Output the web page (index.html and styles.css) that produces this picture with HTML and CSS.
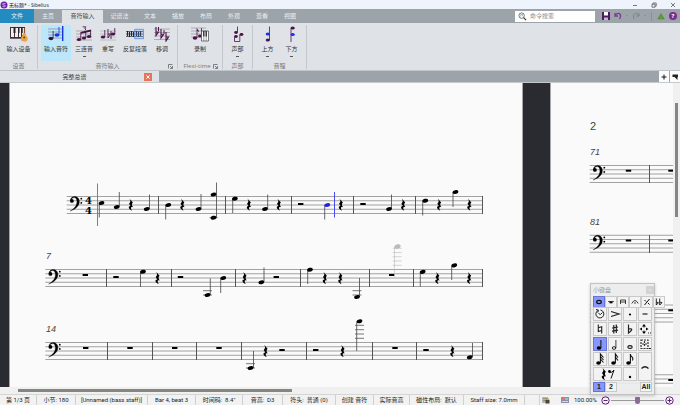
FILE: index.html
```
<!DOCTYPE html>
<html lang="zh-CN">
<head>
<meta charset="utf-8">
<title>无标题* - Sibelius</title>
<link rel="stylesheet" href="styles.css">
</head>
<body>
<svg class="defs" aria-hidden="true">
  <defs>
    <ellipse id="head" rx="2.9" ry="1.9" transform="rotate(-16)"/>
    <path id="rest" d="M-1.6-6.2 1.9-2.2C.4-.8.6.7 2.2 2.6-.2 1.6-.8 3.2 1 6-3 4.4-3 1.2-.4 1.4L-2-.9C-.3-2.6-.2-4-1.6-6.2Z"/>
    <rect id="bar-rest" x="-2.7" y="-1" width="5.4" height="2"/>
    <g id="clef">
      <circle cx="5.4" cy="4.400" r="1.900"/>
      <path d="M3.900 4C3.900-1.300 12.900-1.400 12.900 5 12.900 9.600 9 12.600 3.600 14.600 8.300 11.700 10.400 9 10.400 5 10.400.2 5.600-.2 4.500 4Z" stroke="#000" stroke-width=".3"/>
      <circle cx="14.800" cy="2.200" r=".9"/><circle cx="14.800" cy="6.400" r=".9"/>
    </g>
    <path id="lines" d="M0 0H437.400M0 4.250H437.400M0 8.500H437.400M0 12.750H437.400M0 17H437.400"/>
  </defs>
</svg>

<header class="titlebar">
  <svg class="app-logo" viewBox="0 0 8 8"><circle cx="4" cy="4" r="3.500" fill="#6a1fb0"/><path d="M5.500 2.500H3.500Q2.500 2.500 2.500 3.300T4 4.100 5.400 5 4.300 5.700H2.400" fill="none" stroke="#e7d3ff" stroke-width=".7"/></svg>
  <h1>无标题* - Sibelius</h1>
  <div class="window-buttons">
    <button aria-label="最小化"><svg viewBox="0 0 6 6"><path d="M1 3.500H5"/></svg></button>
    <button aria-label="还原"><svg viewBox="0 0 6 6"><path d="M1 2.200H4V5.200H1ZM2 2V1H5.200V4.200H4.200"/></svg></button>
    <button aria-label="关闭"><svg viewBox="0 0 6 6"><path d="M1 1 5 5M5 1 1 5"/></svg></button>
  </div>
</header>

<nav class="menu">
  <button class="file">文件</button>
  <button>主页</button>
  <button class="active">音符输入</button>
  <button class="wide">记谱法</button>
  <button>文本</button>
  <button>播放</button>
  <button>布局</button>
  <button>外观</button>
  <button>查看</button>
  <button>视图</button>
  <div class="tools">
    <label class="search">
      <svg viewBox="0 0 10 10"><circle cx="4" cy="4" r="3" fill="none" stroke="#444" stroke-width=".8"/><path d="M6.200 6.200 9 9" stroke="#333" stroke-width="1.300"/><path d="M3 5V3L5 2.700V4.600" fill="none" stroke="#777" stroke-width=".6"/></svg>
      <input type="text" placeholder="命令搜索" aria-label="命令搜索">
    </label>
    <button aria-label="保存"><svg viewBox="0 0 8 8"><path d="M0 0H8V8H0Z" fill="#4c1b62"/><path d="M2 0H6V3.500H2Z" fill="#fff"/><path d="M2 5.500H6V8H2Z" fill="#c8b8d2"/></svg></button>
    <button aria-label="撤销"><svg viewBox="0 0 8 8"><path d="M1 1V4H4M1.300 3.700C2.500.2 7.300.8 6.400 5.200L5.500 7" fill="none" stroke="#75408f" stroke-width="1.300"/></svg></button>
    <i class="caret"></i>
    <button aria-label="重做"><svg viewBox="0 0 8 8"><path d="M7 1V4H4M6.700 3.700C5.500.2.700.8 1.600 5.200L2 7" fill="none" stroke="#7c8488" stroke-width="1"/></svg></button>
    <i class="caret"></i>
    <i class="divider"></i>
    <button aria-label="更新"><svg viewBox="0 0 8 8"><path d="M4 1.500 7.300 7H.7Z" fill="#5f9d3c" stroke="#47752f" stroke-width=".4"/></svg></button>
    <button aria-label="帮助" class="help">?</button>
  </div>
</nav>

<section class="ribbon">
  <div class="group">
    <div class="commands">
      <button class="command"><svg viewBox="0 0 18 16"><path d="M0 1H15V12H0Z" fill="#3b3039"/><path d="M1 2H4V11H1ZM5 2H8V11H5ZM9 2H11V11H9ZM12 2H14V9H12Z" fill="#f4f0f2"/><path d="M3.500 1H5.500V7H3.500ZM8 1H9.500V7H8ZM11.300 1H12.700V7H11.300Z" fill="#2a2028"/><path d="M0 12H15V13H0Z" fill="#70646c"/><path d="M14.500 2V9" stroke="#83502c" stroke-width="1.200"/><path d="M12.500 7.500Q14.500 6.500 15.800 8 16 9.500 17.500 11.500 18.500 16 14 15.600 9.500 15.300 11.500 11 13 9 12.500 7.500Z" fill="#eba74b"/><circle cx="14.200" cy="11.500" r="1.100" fill="#6e4526"/></svg>输入设备</button>
    </div>
    <p>设置</p>
  </div>
  <div class="group entry">
    <div class="commands">
      <button class="command selected"><svg viewBox="0 0 18 16"><path d="M1 3H16M1 6H16M1 9H16M1 12H16" stroke="#777790" stroke-width=".6"/><g fill="#35124a"><ellipse cx="4" cy="12.500" rx="2.400" ry="1.700"/><path d="M5.700 5H6.500V12H5.700Z"/></g><g fill="#1735dc"><ellipse cx="10" cy="9" rx="2.400" ry="1.700"/><path d="M11.600 1H12.400V9H11.600ZM15 0H16.400V15H15Z"/></g></svg>输入音符</button>
      <button class="command narrow"><svg viewBox="0 0 18 16"><path d="M1 5H17M1 8H17M1 11H17M1 14H17" stroke="#888" stroke-width=".6"/><g fill="#4b1248"><ellipse cx="4" cy="13.500" rx="2.200" ry="1.600"/><ellipse cx="9" cy="12" rx="2.200" ry="1.600"/><ellipse cx="14" cy="10.500" rx="2.200" ry="1.600"/><path d="M5.400 6 16 3.500V5.500L6.200 7.800V13.500H5.400ZM10.400 6H11.200V12H10.400ZM15.200 4H16V10.500H15.200Z"/></g><path d="M7.500.8H11L9.500 2.300Q12 2.500 10 4.300" fill="none" stroke="#4b1248" stroke-width=".8"/></svg>三连音<i class="drop"></i></button>
      <button class="command narrow"><svg viewBox="0 0 18 16"><path d="M1 5H17M1 8H17M1 11H17M1 14H17" stroke="#999" stroke-width=".5"/><g fill="#4b1248"><ellipse cx="4" cy="11" rx="2.200" ry="1.600"/><ellipse cx="14" cy="8" rx="2.200" ry="1.600"/><path d="M5.400 4H6.200V11H5.400ZM15.400 2H16.200V8H15.400Z"/></g><path d="M9 3V12L11.500 8 9 8M12 5V13" fill="none" stroke="#4b1248" stroke-width=".9"/></svg>重写</button>
      <button class="command"><svg viewBox="0 0 18 16"><path d="M0 5.500H17M0 8H17M0 10.500H17" stroke="#333" stroke-width=".7"/><path d="M1.500 5V10M3.500 6V11M5.500 5V10M7.500 6V11M10.500 5V10M12.500 6V11M14.500 5V10" stroke="#28203a" stroke-width="1.100"/><path d="M8.700 3.300H17.500V12.700H8.700Z" fill="#5ba0f040" stroke="#528de2" stroke-width=".8"/></svg>反复段落</button>
      <button class="command narrow"><svg viewBox="0 0 18 16"><path d="M1 3H17M1 6.500H17M1 10H17M1 13.500H17" stroke="#888" stroke-width=".6"/><path d="M3 1V9.500L5.500 6H3M8 3V12L10.500 8.500 8 8M13 6V15L15.500 11 13 11" fill="none" stroke="#4b1248" stroke-width="1.100"/><path d="M5.500 1V5M11 4V8" stroke="#4b1248"/></svg>移调</button>
    </div>
    <p>音符输入<svg class="launcher" viewBox="0 0 5 5"><path d="M.5 4.500V.5H4.500M2 2 4.300 4.300M4.500 2V4.500H2" /></svg></p>
  </div>
  <div class="group record">
    <div class="commands">
      <button class="command"><svg viewBox="0 0 18 16"><path d="M0 2H15M0 5H15M0 8H13M0 11H12" stroke="#888" stroke-width=".6"/><g fill="#4b1248"><ellipse cx="4" cy="12" rx="2.300" ry="1.700"/><ellipse cx="9" cy="10" rx="2" ry="1.500"/><path d="M5.600 2 8 5 7.500 6 6.400 4.500V12H5.600ZM10.200 2H11V10H10.200Z"/></g><path d="M10.500 5H17.500V15H10.500Z" fill="#fff" stroke="#444" stroke-width=".7"/><path d="M12.800 5V15M15.200 5V15" stroke="#444" stroke-width=".5"/><path d="M12.800 5V10.500M15.200 5V10.500" stroke="#241c26" stroke-width="1.200"/></svg>录制</button>
    </div>
    <p>Flexi-time<svg class="launcher" viewBox="0 0 5 5"><path d="M.5 4.500V.5H4.500M2 2 4.300 4.300M4.500 2V4.500H2"/></svg></p>
  </div>
  <div class="group voice">
    <div class="commands">
      <button class="command narrow"><svg viewBox="0 0 18 16"><g fill="#4b1248"><ellipse cx="7" cy="6.500" rx="1.800" ry="1.400"/><ellipse cx="7" cy="10.500" rx="1.800" ry="1.400"/><ellipse cx="12.500" cy="8.500" rx="1.900" ry="1.400"/></g><path d="M8.500.5V6.500M5.500 10.500V15.500H10.800V8.500" fill="none" stroke="#4b1248" stroke-width=".8"/></svg>声部<i class="drop"></i></button>
    </div>
    <p>声部</p>
  </div>
  <div class="group interval">
    <div class="commands">
      <button class="command narrow"><svg viewBox="0 0 18 16"><path d="M10.500.5V14" stroke="#4b1248" stroke-width=".8"/><ellipse cx="8.800" cy="14" rx="2.100" ry="1.600" fill="#4b1248"/><ellipse cx="8.800" cy="8" rx="2.100" ry="1.600" fill="#1b2ef0"/></svg>上方<i class="drop"></i></button>
      <button class="command narrow"><svg viewBox="0 0 18 16"><path d="M8 2V16" stroke="#4b1248" stroke-width=".8"/><ellipse cx="9.700" cy="2" rx="2.100" ry="1.600" fill="#4b1248"/><ellipse cx="9.700" cy="8.500" rx="2.100" ry="1.600" fill="#1b2ef0"/></svg>下方<i class="drop"></i></button>
    </div>
    <p>音程</p>
  </div>
</section>

<div class="tabs">
  <div class="tab"><span>完整总谱</span><button aria-label="关闭标签"><svg viewBox="0 0 8 8"><path d="M2.300 2.300 5.700 5.700M5.700 2.300 2.300 5.700" stroke="#fff"/></svg></button></div>
  <button class="square add" aria-label="新建标签"><svg viewBox="0 0 10 10"><path d="M5 2.500V7.500M2.500 5H7.500" stroke="#111"/></svg></button>
  <button class="square" aria-label="切换窗口"><svg viewBox="0 0 10 10"><path d="M2.500 2.500H8V5H2.500ZM4.500 5H7.500V8Z" fill="#222"/></svg></button>
</div>

<main class="workspace">
  <div class="gutter left"></div>
  <svg class="page" viewBox="10 83 512 304" preserveAspectRatio="xMinYMin slice" role="img" aria-label="第 1 页">
    <g class="staff">
      <path d="M66.700 196.500H482.700M66.700 200.750H482.700M66.700 205H482.700M66.700 209.250H482.700M66.700 213.500H482.700"/>
      <use href="#lines" x="45.300" y="269.500"/>
      <use href="#lines" x="45.300" y="342.500"/>
    </g>
    <path class="bars" d="M158.500 196V214M225.500 196V214M291.500 196V214M353.500 196V214M415.500 196V214M482.500 196V214M106.500 269V287M171.500 269V287M235.500 269V287M300.500 269V287M369.500 269V287M413.500 269V287M482.500 269V287M107.500 342V360M152.500 342V360M196.500 342V360M241.500 342V360M306.500 342V360M372.500 342V360M416.500 342V360M482.500 342V360"/>
    <path class="stems" d="M99.300 203V217.500M119.300 192V207M149.500 194.500V209M165.700 205V219.500M201 194V209M216.500 182.500V218M232.700 199V213M267.700 194.500V209M324.700 205V219.500M391.500 194.500V209M422.700 201V215.500M453 192V207
      M140.500 272V287M210.300 278.500V295M220.700 278V293M264 267.500V282M307.700 270V284M359.500 278V297M420.300 272V286.500M451.700 265.500V280
      M253.500 351V368M356.700 321.500V351M472.500 343V357"/>
    <path class="ledgers" d="M209.500 217.700H217.500M203 290.700H212M203 295H212M352.500 290.700H361.500M352.500 295H361.500M246 363.700H255M246 368H255M355 325.300H364M355 329.700H364M355 334H364M355 338.300H364"/>
    <use href="#clef" x="66.500" y="196.500"/><use href="#clef" x="45" y="269.500"/><use href="#clef" x="45" y="342.500"/>
    <text class="meter" x="88.500" y="204">4</text><text class="meter" x="88.500" y="214">4</text>
    <g>
      <use href="#head" x="101.500" y="203"/><use href="#head" x="116.700" y="207"/><use href="#head" x="146.700" y="209"/>
      <use href="#head" x="168.300" y="205"/><use href="#head" x="198.500" y="209"/><use href="#head" x="213.500" y="194.500"/><use href="#head" x="213.500" y="217.700"/>
      <use href="#head" x="234.900" y="198.700"/><use href="#head" x="265" y="209"/><use href="#head" x="389" y="209"/>
      <use href="#head" x="425.300" y="200.700"/><use href="#head" x="455.500" y="192"/>
      <use href="#head" x="143" y="271.700"/><use href="#head" x="207.500" y="295"/><use href="#head" x="223.300" y="278"/><use href="#head" x="261.300" y="282.300"/>
      <use href="#head" x="310" y="269.700"/><use href="#head" x="357" y="297"/><use href="#head" x="422.700" y="271.900"/><use href="#head" x="454.300" y="265.400"/>
      <use href="#head" x="250.500" y="368"/><use href="#head" x="359.500" y="321.300"/><use href="#head" x="469.700" y="357.300"/>
    </g>
    <g>
      <use href="#rest" x="131" y="204.700"/><use href="#rest" x="182.500" y="204.700"/><use href="#rest" x="249" y="204.700"/><use href="#rest" x="279" y="204.700"/><use href="#rest" x="341" y="204.700"/><use href="#rest" x="403.300" y="204.700"/><use href="#rest" x="439.300" y="204.700"/><use href="#rest" x="469.500" y="204.700"/>
      <use href="#rest" x="157.700" y="278"/><use href="#rest" x="244.700" y="278"/><use href="#rest" x="325" y="278"/><use href="#rest" x="340.500" y="278"/><use href="#rest" x="437.500" y="278"/><use href="#rest" x="469.300" y="278"/>
      <use href="#rest" x="265.700" y="351"/><use href="#rest" x="342.700" y="351"/><use href="#rest" x="452.500" y="351"/>
    </g>
    <g>
      <use href="#bar-rest" x="300.700" y="204"/><use href="#bar-rest" x="363" y="204"/>
      <use href="#bar-rest" x="85.300" y="275"/><use href="#bar-rest" x="116" y="277"/><use href="#bar-rest" x="180.500" y="277"/><use href="#bar-rest" x="276.300" y="277"/><use href="#bar-rest" x="391.700" y="275"/>
      <use href="#bar-rest" x="85.700" y="348"/><use href="#bar-rest" x="130" y="348"/><use href="#bar-rest" x="174.700" y="348"/><use href="#bar-rest" x="219" y="348"/><use href="#bar-rest" x="282" y="350"/><use href="#bar-rest" x="315.700" y="350"/><use href="#bar-rest" x="395" y="348"/><use href="#bar-rest" x="426" y="350"/>
    </g>
    <path d="M97.500 183.500V226" stroke="#3fa860"/>
    <use href="#head" x="327.300" y="205" fill="#2222ee"/>
    <path d="M334.500 192V217.500" stroke="#4a4af0"/>
    <g fill="#bbb" stroke="#bbb" stroke-width=".6"><use href="#head" x="397.500" y="246.500"/><path d="M394.500 247V277M392.700 248.300H401.700M392.700 252.500H401.700M392.700 256.700H401.700M392.700 261H401.700M392.700 265.300H401.700"/></g>
    <text class="number" x="46" y="259">7</text>
    <text class="number" x="46" y="332">14</text>
  </svg>
  <div class="gutter"></div>
  <svg class="page second" viewBox="551 83 122 304" preserveAspectRatio="xMinYMin slice" role="img" aria-label="第 2 页">
    <g class="staff">
      <use href="#lines" x="589.700" y="165.500"/><use href="#lines" x="589.700" y="235.250"/><use href="#lines" x="589.700" y="305"/><use href="#lines" x="589.700" y="374.750"/>
    </g>
    <path class="bars" d="M649.500 165V183M649.500 235V253M649.500 305V322M649.500 375V387"/>
    <use href="#clef" x="589.500" y="165.500"/><use href="#clef" x="589.500" y="235.250"/><use href="#clef" x="589.500" y="305"/><use href="#clef" x="589.500" y="374.750"/>
    <use href="#bar-rest" x="628.500" y="170.700"/><use href="#bar-rest" x="671" y="170.700"/><use href="#bar-rest" x="628.500" y="240.500"/><use href="#bar-rest" x="671" y="240.500"/><use href="#bar-rest" x="671" y="310.300"/><use href="#bar-rest" x="671" y="380"/>
    <text class="page-number" x="590" y="130">2</text>
    <text class="number" x="590" y="155">71</text>
    <text class="number" x="590" y="225">81</text>
  </svg>
  <div class="scroll-y"><i></i></div>
</main>
<div class="scroll-x"><i></i></div>

<footer class="status">
  <span>第 1/3 页</span>
  <span>小节: 180</span>
  <span>[Unnamed (bass staff)]</span>
  <span>Bar 4, beat 3</span>
  <span>时间码:&nbsp; 8.4"</span>
  <span>音高:&nbsp; D3</span>
  <span>符头:&nbsp; 普通 (0)</span>
  <span>创建 音符</span>
  <span>实际音高</span>
  <span>磁性布局:&nbsp; 默认</span>
  <span>Staff size: 7.0mm</span>
  <span></span>
  <div class="zoom">
    <svg viewBox="0 0 8 8"><path d="M0 1H6V7H0Z" fill="#b9b9b9"/><path d="M1 2.500H5M1 4.500H4" stroke="#777" stroke-width=".6"/><path d="M3.500 4H7.500V7.500H3.500Z" fill="#4d4432"/><path d="M4.300 4V2.800H6.700V4" fill="none" stroke="#b98b22" stroke-width=".8"/></svg>
    <svg viewBox="0 0 8 8"><path d="M0 1H8V7H0Z" fill="#8d8fa8"/><path d="M1 2H4V4H1Z" fill="#d77"/><path d="M4 2H7V4H4Z" fill="#7cc"/><path d="M1 5.500H7" stroke="#eee" stroke-width=".8"/></svg>
    <label for="zoom">100.00%</label>
    <button aria-label="缩小"><svg viewBox="0 0 9 9"><circle cx="4.500" cy="4.500" r="3.700"/><path d="M2.500 4.500H6.500"/></svg></button>
    <input id="zoom" type="range" min="0" max="100" value="50">
    <button aria-label="放大"><svg viewBox="0 0 9 9"><circle cx="4.500" cy="4.500" r="3.700"/><path d="M2.500 4.500H6.500M4.500 2.500V6.500"/></svg></button>
  </div>
</footer>

<aside class="keypad">
  <header><span>小键盘</span><button aria-label="关闭小键盘">×</button></header>
  <div class="layouts">
    <button class="on" aria-label="常用音符"><svg viewBox="0 0 10 10"><ellipse cx="5" cy="5" rx="2.300" ry="1.600" fill="none" stroke="#111" stroke-width="1.200"/></svg></button>
    <button aria-label="更多音符"><svg viewBox="0 0 10 10"><path d="M2 4.500H8" stroke="#111" stroke-width=".7"/><path d="M3.500 4.500H6.500V6.300H3.500Z"/></svg></button>
    <button aria-label="符杠"><svg viewBox="0 0 10 10"><path d="M2.500 7V3H7.500V7M2.500 5H7.500" fill="none" stroke="#111" stroke-width=".8"/></svg></button>
    <button aria-label="奏法"><svg viewBox="0 0 10 10"><path d="M1.800 6.500Q5 .5 8.200 6.500" fill="none" stroke="#111" stroke-width=".8"/><circle cx="5" cy="6" r=".7"/></svg></button>
    <button aria-label="爵士奏法"><svg viewBox="0 0 10 10"><path d="M2.500 8 7.500 2M2.500 3 4 4.500M6 6 7.500 7.500" stroke="#111"/></svg></button>
    <button aria-label="变音记号"><svg viewBox="0 0 10 10"><path d="M2.300 1.500V8L4.500 5.700 2.300 5M5.700 1.500V8L8 5.700 5.700 5" fill="none" stroke="#111" stroke-width=".9"/></svg></button>
  </div>
  <div class="keys">
    <button aria-label="返回"><svg viewBox="0 0 14 14"><path d="M5 3.400A4 4 0 1 0 7.500 3M3 2.500 5.500 3.200 4.700 5.500M7.500 7.500 9.500 5.500M7.500 7.500 5.500 6.500" fill="none" stroke="#222"/></svg></button>
    <button aria-label="重音"><svg viewBox="0 0 14 14"><path d="M3 4.500 11 7 3 9.500" fill="none" stroke="#222" stroke-width="1.200"/></svg></button>
    <button aria-label="断奏"><svg viewBox="0 0 14 14"><circle cx="7" cy="7.500" r="1.100"/></svg></button>
    <button aria-label="保持音"><svg viewBox="0 0 14 14"><path d="M4.500 7H9.500" stroke="#222" stroke-width="1.200"/></svg></button>
    <button aria-label="还原号"><svg viewBox="0 0 14 14"><path d="M5.300 2.500V9.500L8.700 8.500M8.700 11.500V4.700L5.300 5.700" fill="none" stroke="#222" stroke-width="1.100"/></svg></button>
    <button aria-label="升号"><svg viewBox="0 0 14 14"><path d="M5.800 3V11.500M8.300 2.500V11M4 6 10 5M4 9.200 10 8.200" stroke="#222" stroke-width="1.200"/></svg></button>
    <button aria-label="降号"><svg viewBox="0 0 14 14"><path d="M5.500 2.500V11Q12 6 5.500 7" fill="none" stroke="#222" stroke-width="1.200"/></svg></button>
    <button aria-label="移动"><svg viewBox="0 0 14 14"><path d="M6 2 8 4.500H4ZM6 12 4 9.500H8ZM1.500 7 4 5.500V8.500ZM10.500 7 8 5.500V8.500Z"/><path d="M6 4V5.500M6 8.500V10" stroke="#222"/><path d="M10 11H13" stroke="#222" stroke-dasharray="1"/></svg></button>
    <button class="on" aria-label="四分音符"><svg viewBox="0 0 14 14"><ellipse cx="6" cy="11" rx="2.300" ry="1.700"/><path d="M7.900 3V11" stroke="#111"/></svg></button>
    <button aria-label="二分音符"><svg viewBox="0 0 14 14"><ellipse cx="6" cy="11" rx="1.800" ry="1.300" fill="none" stroke="#111" stroke-width=".9"/><path d="M7.900 3V11" stroke="#111" stroke-width=".8"/></svg></button>
    <button aria-label="全音符"><svg viewBox="0 0 14 14"><ellipse cx="7" cy="10" rx="2.200" ry="1.400" fill="none" stroke="#111" stroke-width="1.100"/></svg></button>
    <button aria-label="选择音符"><svg viewBox="0 0 14 14"><path d="M3 3H10V11.500H3ZM4 7H9M6.500 4V10" fill="none" stroke="#333" stroke-width="1.200" stroke-dasharray="2 1"/><path d="M11 11.500H13" stroke="#222"/></svg></button>
    <button aria-label="三十二分音符"><svg viewBox="0 0 14 14"><ellipse cx="5.500" cy="11" rx="2.300" ry="1.700"/><path d="M7.400 11V2L10.500 5.500M7.400 4.500 10.500 8M7.400 7 10.500 10.500" fill="none" stroke="#111" stroke-width="1.100"/></svg></button>
    <button aria-label="十六分音符"><svg viewBox="0 0 14 14"><ellipse cx="5.500" cy="11" rx="2.300" ry="1.700"/><path d="M7.400 11V2L10 5.500M7.400 5 10 8.500" fill="none" stroke="#111" stroke-width="1.100"/></svg></button>
    <button aria-label="八分音符"><svg viewBox="0 0 14 14"><ellipse cx="5.500" cy="11" rx="2.300" ry="1.700"/><path d="M7.400 11V2Q7.500 4 9.500 5.500 10.500 7 9.300 8.500" fill="none" stroke="#111" stroke-width="1.100"/></svg></button>
    <button class="tall" aria-label="连音线"><svg viewBox="0 0 14 14"><path d="M3.500 8.500Q7 5 10.500 8.500" fill="none" stroke="#222" stroke-width="1.200"/></svg></button>
    <button class="broad" aria-label="休止符"><svg viewBox="0 0 20 14"><use href="#rest" x="6" y="7"/><circle cx="11.500" cy="4.500" r="1.400"/><path d="M11.500 5.500Q14 6 16 3L13 11.500" fill="none" stroke="#111"/></svg></button>
    <button aria-label="附点"><svg viewBox="0 0 14 14"><circle cx="7" cy="10" r="1.200"/></svg></button>
  </div>
  <div class="voices"><button class="on">1</button><button>2</button><button class="all">All</button></div>
</aside>
</body>
</html>
```
FILE: styles.css
```
* {
  box-sizing: border-box;
}

html,
body {
  height: 100%;
}

body {
  margin: 0;
  display: flex;
  flex-direction: column;
  position: relative;
  overflow: hidden;
  background: #fafafa;
  color: #333;
  font: 6px/8px "Open Sans", "Noto Sans CJK SC", sans-serif;
}

button,
input {
  margin: 0;
  padding: 0;
  border: 0;
  background: none;
  color: inherit;
  font: inherit;
}

h1,
p {
  margin: 0;
  font: inherit;
}

svg {
  display: block;
  flex: none;
}

.defs {
  position: absolute;
  width: 0;
  height: 0;
}

/* Title bar */
.titlebar {
  display: flex;
  align-items: center;
  height: 9px;
  flex: none;
  background: #eff3fb;
}

.app-logo {
  width: 8px;
  height: 8px;
}

.titlebar h1 {
  margin-left: 1px;
  color: #222;
  font-size: 5px;
}

.window-buttons {
  display: flex;
  gap: 13px;
  margin-left: auto;
  padding-right: 4px;
}

.window-buttons svg {
  width: 6px;
  height: 6px;
  fill: none;
  stroke: #444;
  stroke-width: 0.7;
}

/* Menu row */
.menu {
  display: flex;
  height: 14px;
  flex: none;
  background: #9ca3a9;
  color: #eceff1;
}

.menu > button {
  width: 28px;
}

.menu > .file {
  width: 34px;
  background: #238bbf;
}

.menu > .active {
  width: 41px;
  margin-top: 1px;
  padding-bottom: 1px;
  background: #dfe3e8;
  color: #444;
}

.menu > .wide {
  width: 33px;
}

.tools {
  display: flex;
  align-items: center;
  gap: 4px;
  margin-left: auto;
  padding-right: 3px;
}

.tools button svg {
  width: 8px;
  height: 8px;
}

.search {
  display: flex;
  align-items: center;
  gap: 3px;
  width: 80px;
  height: 11px;
  margin-right: 3px;
  padding-left: 3px;
  background: #fff;
}

.search svg {
  width: 9px;
  height: 9px;
}

.search input {
  width: 60px;
}

.search input::placeholder {
  color: #888;
}

.caret {
  border: 1px solid transparent;
  border-top-color: #7c8389;
}

.divider {
  width: 1px;
  height: 9px;
  margin: 0 1px;
  background: #8a9197;
}

.tools .help {
  width: 8px;
  height: 8px;
  border-radius: 50%;
  background: #7d2a93;
  color: #fff;
  font-weight: 700;
}

/* Ribbon */
.ribbon {
  display: flex;
  flex: none;
  height: 48px;
  padding-top: 2px;
  border-bottom: 1px solid #bfc4c8;
  background: #dfe3e8;
}

.group {
  display: flex;
  flex-direction: column;
  width: 38px;
  height: 44px;
  border-right: 1px solid #c3c8cc;
}

.entry {
  width: 140px;
}

.record {
  width: 45px;
}

.voice {
  width: 30px;
}

.interval {
  width: 54px;
}

.commands {
  display: flex;
  justify-content: center;
  height: 36px;
}

.command {
  display: flex;
  flex-direction: column;
  align-items: center;
  width: 30px;
  height: 36px;
  padding-top: 1px;
  white-space: nowrap;
}

.command.narrow {
  width: 24px;
}

.command.selected {
  margin-right: 1px;
  background: #bce6fa;
}

.command svg {
  width: 18px;
  height: 16px;
  margin-bottom: 3px;
}

.drop {
  width: 3px;
  height: 1px;
  margin-top: 3px;
  background: #555;
}

.group p {
  position: relative;
  margin-top: 1px;
  color: #777;
  text-align: center;
}

.record p {
  padding-right: 6px;
}

.launcher {
  position: absolute;
  right: 4px;
  top: 2px;
  width: 5px;
  height: 5px;
  fill: none;
  stroke: #555;
  stroke-width: 0.7;
}

/* Document tabs */
.tabs {
  display: flex;
  gap: 1px;
  flex: none;
  height: 12px;
  border-bottom: 1px solid #c6cacd;
  background: #9ca3a9;
}

.tab {
  display: flex;
  align-items: center;
  width: 159px;
  padding-right: 7px;
  background: #dfe3e8;
}

.tab span {
  flex: 1;
  padding-left: 5px;
  text-align: center;
}

.tab button {
  width: 8px;
  height: 8px;
  background: #e6745b;
}

.square {
  width: 10px;
  background: #fcfcfc;
}

.square.add {
  margin-left: auto;
}

/* Score */
.workspace {
  display: flex;
  flex: 1;
  min-height: 0;
}

.gutter {
  width: 29px;
  flex: none;
  border: solid #a6a6aa;
  border-width: 0 1px;
  background: #2a2a31;
}

.gutter.left {
  width: 10px;
  border-left: 0;
}

.page {
  flex: 1;
  min-width: 0;
  height: 304px;
}

.page.second {
  flex: 0 0 122px;
}

.staff {
  fill: none;
  stroke: #8c8c8c;
  stroke-width: 0.8;
}

.bars {
  stroke: #555;
}

.stems {
  stroke: #444;
  stroke-width: 0.8;
}

.ledgers {
  stroke: #555;
  stroke-width: 0.8;
}

.meter {
  font: 700 10px "DejaVu Serif", serif;
  text-anchor: middle;
}

.number {
  fill: #444;
  font: italic 9px "Liberation Sans", sans-serif;
}

.page-number {
  fill: #444;
  font: 11px "Liberation Sans", sans-serif;
}

.scroll-y {
  width: 7px;
  flex: none;
  padding: 20px 2px 0;
  background: #f0f0f0;
}

.scroll-y i {
  display: block;
  height: 114px;
  background: #858585;
}

.scroll-x {
  height: 7px;
  flex: none;
  padding: 2px 18px;
  background: #f0f0f0;
}

.scroll-x i {
  display: block;
  width: 274px;
  height: 3px;
  background: #868680;
}

/* Status bar */
.status {
  display: grid;
  grid-template-columns: 37fr 39fr 72fr 48fr 47fr 40fr 53fr 38fr 36fr 54fr 61fr 15fr 140fr;
  align-items: center;
  flex: none;
  height: 11px;
  border-top: 1px solid #d5d5d5;
  background: #f2f2f2;
  color: #222;
  font-family: Roboto, "Noto Sans CJK SC", sans-serif;
  white-space: nowrap;
}

.status > span {
  height: 10px;
  border-right: 1px solid #d0d0d0;
  line-height: 10px;
  text-align: center;
}

.zoom {
  display: flex;
  align-items: center;
  gap: 4px;
  min-width: 0;
  padding: 0 6px 0 2px;
}

.zoom > svg {
  width: 8px;
  height: 8px;
  margin-right: 7px;
}

.zoom > svg + svg {
  margin-right: 1px;
}

.zoom button svg {
  width: 9px;
  height: 9px;
  fill: #f6effa;
  stroke: #5b2377;
}

.zoom input {
  flex: 1;
  width: 0;
  min-width: 0;
  height: 8px;
  margin: 0 -3px;
  appearance: none;
  background: linear-gradient(#999, #999) center / 100% 1px no-repeat;
}

.zoom input::-webkit-slider-thumb {
  appearance: none;
  width: 5px;
  height: 7px;
  border-radius: 1px 1px 3px 3px;
  background: #8b6c9b;
}

/* Keypad floats over the score */
.keypad {
  position: absolute;
  right: 25px;
  bottom: 10px;
  width: 65px;
  padding: 2px;
  border: 1px solid #c2c2c2;
  background: #ebebebe8;
  box-shadow: 0 1px 3px #0003;
}

.keypad header {
  display: flex;
  justify-content: space-between;
  height: 10px;
  color: #999;
}

.keypad header button {
  width: 8px;
  height: 8px;
  margin-right: -2px;
  background: #d2d2d2;
  color: #eee;
}

.layouts {
  display: grid;
  grid-template-columns: repeat(6, 1fr);
  height: 10px;
  width: 59px;
}

.keypad .layouts button,
.keys button,
.voices button {
  display: grid;
  place-items: center;
  place-content: center;
  border: 1px solid #c9c9c9;
  background: #f4f4f4e0;
  color: #222;
}

.layouts svg {
  width: 10px;
  height: 10px;
}

.keys {
  display: grid;
  grid-template-columns: repeat(4, 14px);
  grid-auto-rows: 14px;
  gap: 1px;
  margin: 1px 0;
}

.keys svg {
  width: 14px;
  height: 14px;
}

.keys .tall {
  grid-row: span 2;
}

.keys .broad {
  grid-column: span 2;
}

.keys .broad svg {
  width: 20px;
}

.keypad .layouts .on,
.keys .on,
.voices .on {
  border-color: #6674d8;
  background: #8797fa;
}

.voices {
  display: flex;
  width: 59px;
  font: 700 7px/8px "Liberation Sans", sans-serif;
}

.voices button {
  width: 12px;
  height: 10px;
}

.voices .all {
  margin-left: auto;
}
```
